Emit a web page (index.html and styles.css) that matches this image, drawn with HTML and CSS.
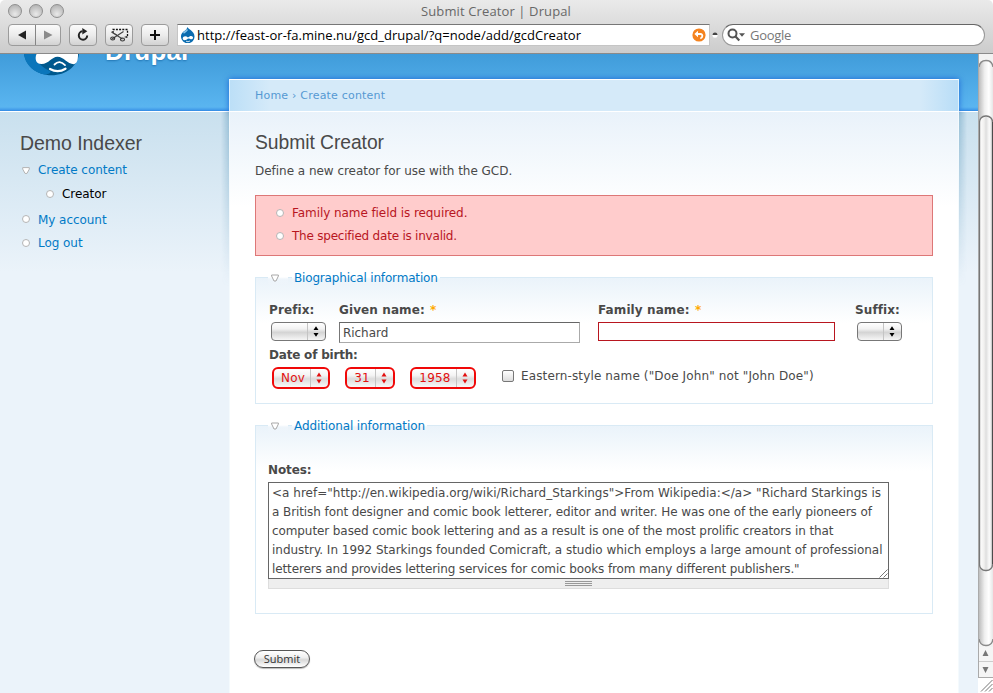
FILE: index.html
```html
<!DOCTYPE html>
<html lang="en">
<head>
<meta charset="utf-8">
<title>Submit Creator | Drupal</title>
<link rel="stylesheet" href="styles.css">
</head>
<body>
<header class="chrome">
  <div class="titlebar">
    <div class="lights"><i></i><i></i><i></i></div>
    <div class="wintitle"><span>Submit Creator | Drupal</span></div>
  </div>
  <div class="toolbar">
    <div class="btn pair">
      <span><svg width="26" height="20" viewBox="0 0 26 20"><path d="M17 5.500v9L9 10z" fill="#222"/></svg></span>
      <span><svg width="25" height="20" viewBox="0 0 25 20"><path d="M8 5.500v9l8.500-4.500z" fill="#8b8b8b"/></svg></span>
    </div>
    <div class="btn"><svg width="26" height="20" viewBox="0 0 26 20"><path d="M12.500 6.300a4.200 4.200 0 1 0 4.700 4.200" fill="none" stroke="#222" stroke-width="2"/><path d="M12.300 3v6.500l5-3.200z" fill="#222"/></svg></div>
    <div class="btn"><svg width="26" height="20" viewBox="0 0 26 20"><path d="M7 8V4.500h14.500v7.500H18" fill="none" stroke="#111" stroke-width="1.300" stroke-dasharray="2 1.200"/><path d="M5.500 7l11 7M6 14l11.500-7.500" stroke="#444" stroke-width="1.200" fill="none"/><path d="M5 6.200l6 3.200-.5 1z" fill="#444"/><ellipse cx="6.700" cy="13.500" rx="2" ry="1.500" fill="none" stroke="#333" stroke-width="1.100"/><ellipse cx="16.500" cy="14.500" rx="2" ry="1.500" fill="none" stroke="#333" stroke-width="1.100"/></svg></div>
    <div class="btn"><svg width="26" height="20" viewBox="0 0 26 20"><path d="M13 5v10M8 10h10" stroke="#111" stroke-width="2"/></svg></div>
    <div class="url">
      <svg class="favicon" width="15" height="16" viewBox="0 0 15 16"><path d="M7.500 0C8 2.400 14.500 4 14.500 9.500A6.500 6.300 0 0 1 1 10C.6 4.500 6.700 4 7.500 0z" fill="#0a6cb0"/><path d="M3.500 6Q6 4.500 7.500 2.500" stroke="#8cc6ea" stroke-width="1.500" fill="none"/><path d="M2.700 11.300c.4-2.500 3.500-2.700 5.300-.7 1.700-2 4-2.300 4.900-.5.600 1.900-1.300 3-3 1.700L8 11.500c-2 2.300-5.300 2.300-5.300-.2z" fill="#fff"/><path d="M6 14.200q2 1.200 4-.2" stroke="#fff" fill="none" stroke-width=".8"/></svg>
      <span class="address">http://feast-or-fa.mine.nu/gcd_drupal/?q=node/add/gcdCreator</span>
      <svg class="snap" width="14" height="14" viewBox="0 0 14 14"><circle cx="7" cy="7" r="6.600" fill="#f5831f"/><path d="M5 6h3.500c2.600 0 2.400 3.700-.2 4.500" fill="none" stroke="#fff" stroke-width="1.800"/><path d="M6 2.800v6.400L2.400 6z" fill="#fff"/></svg>
    </div>
    <svg class="divider" width="6" height="8" viewBox="0 0 6 8"><circle cx="3" cy="4.300" r="2.500" fill="#fff"/><path d="M.5 4a2.500 2.500 0 0 1 5 0z" fill="#444"/></svg>
    <div class="search">
      <svg width="19" height="14" viewBox="0 0 19 14"><circle cx="5.500" cy="5.500" r="4" fill="none" stroke="#555" stroke-width="2"/><path d="M8.500 8.500l3.800 4" stroke="#555" stroke-width="2.200"/><path d="M12 5.200h6l-3 3.600z" fill="#555"/></svg>
      <span>Google</span>
    </div>
  </div>
</header>
<div class="viewport">
  <div class="page">
    <div class="masthead">
      <svg class="logo" width="58" height="23" viewBox="0 0 58 23"><path d="M1 0H56C54.500 12 43 21.300 28.500 21.300S3 12 1 0z" fill="#00598e"/><path d="M1 0H13C13 8 20 14 27 17 29 19 24 21.300 19 20 8 16.500 2 9 1 0z" fill="#0b76bb"/><path d="M13.500 0C11.500 5 13 10 18.500 10 26 10 28.500 2.800 34.500 2.800 41 2.800 44 10.200 51 10.200 55 9 55 4 55 0z" fill="#fff"/><path d="M31.500 10.500q5-5 10.500.6" fill="none" stroke="#fff" stroke-width="1.800" stroke-linecap="round"/><path d="M27 15q8 4.500 15.500-.3" fill="none" stroke="#fff" stroke-width="2.200" stroke-linecap="round"/></svg>
      <div class="sitename">Drupal</div>
    </div>
    <div class="columns">
      <aside class="sidebar">
        <h2>Demo Indexer</h2>
        <ul class="menu">
          <li><svg class="tri" width="8" height="7" viewBox="0 0 8 7"><path d="M.7.6h6.600v1.500L5 6.400H3L.7 2.100z" fill="#fff" stroke="#b3b3b3"/></svg><a>Create content</a></li>
          <li class="sub"><i class="dot"></i><a>Creator</a></li>
          <li><i class="dot"></i><a>My account</a></li>
          <li><i class="dot"></i><a>Log out</a></li>
        </ul>
      </aside>
      <main class="panel">
        <nav class="crumbs"><a>Home</a> › <a>Create content</a></nav>
        <div class="content">
          <h1>Submit Creator</h1>
          <p class="intro">Define a new creator for use with the GCD.</p>
          <ul class="errors">
            <li><i class="dot"></i><span>Family name field is required.</span></li>
            <li><i class="dot"></i><span class="tight">The specified date is invalid.</span></li>
          </ul>
          <section class="group bio">
            <div class="legend"><span class="mark"><svg width="8" height="8" viewBox="0 0 8 8"><path d="M.6 1h6.800v1L5 7H3L.6 2z" fill="#fff" stroke="#a8a8a8"/></svg></span><a class="tight">Biographical information</a></div>
            <div class="names">
              <div class="f-prefix"><label>Prefix:</label><div class="select"><b></b><svg width="17" height="17" viewBox="0 0 17 17"><path d="M5.500 7L8 3.200 10.500 7zM5.500 10l2.500 3.800 2.500-3.800z"/></svg></div></div>
              <div class="f-given"><label>Given name: <em>*</em></label><input type="text" value="Richard"></div>
              <div class="f-family"><label>Family name: <em>*</em></label><input class="bad" type="text"></div>
              <div class="f-suffix"><label>Suffix:</label><div class="select"><b></b><svg width="17" height="17" viewBox="0 0 17 17"><path d="M5.500 7L8 3.200 10.500 7zM5.500 10l2.500 3.800 2.500-3.800z"/></svg></div></div>
            </div>
            <label class="dob">Date of birth:</label>
            <div class="dates">
              <div class="select red month"><b>Nov</b><svg width="17" height="18" viewBox="0 0 17 18"><path d="M5.500 7.500L8 3.500l2.500 4zM5.500 10.500l2.500 4 2.500-4z"/></svg></div>
              <div class="select red day"><b>31</b><svg width="17" height="18" viewBox="0 0 17 18"><path d="M5.500 7.500L8 3.500l2.500 4zM5.500 10.500l2.500 4 2.500-4z"/></svg></div>
              <div class="select red year"><b>1958</b><svg width="17" height="18" viewBox="0 0 17 18"><path d="M5.500 7.500L8 3.500l2.500 4zM5.500 10.500l2.500 4 2.500-4z"/></svg></div>
              <i class="check"></i><span class="eastern">Eastern-style name ("Doe John" not "John Doe")</span>
            </div>
          </section>
          <section class="group extra">
            <div class="legend"><span class="mark"><svg width="8" height="8" viewBox="0 0 8 8"><path d="M.6 1h6.800v1L5 7H3L.6 2z" fill="#fff" stroke="#a8a8a8"/></svg></span><a>Additional information</a></div>
            <label class="notes">Notes:</label>
            <div class="area">
              <div class="text"><p>&lt;a href="http://en.wikipedia.org/wiki/Richard_Starkings"&gt;From Wikipedia:&lt;/a&gt; "Richard Starkings is</p><p>a British font designer and comic book letterer, editor and writer. He was one of the early pioneers of</p><p>computer based comic book lettering and as a result is one of the most prolific creators in that</p><p>industry. In 1992 Starkings founded Comicraft, a studio which employs a large amount of professional</p><p>letterers and provides lettering services for comic books from many different publishers."</p></div>
              <svg class="grip" width="9" height="9" viewBox="0 0 9 9"><path d="M.5 8.500l8-8M4.500 8.500l4-4" stroke="#777" fill="none"/></svg>
            </div>
            <div class="grippie"><i></i></div>
          </section>
          <button class="submit">Submit</button>
        </div>
      </main>
    </div>
  </div>
  <svg class="scroll" width="15" height="639" viewBox="0 0 15 639">
    <defs>
      <linearGradient id="trk"><stop offset="0" stop-color="#bdbdbd"/><stop offset=".4" stop-color="#efefef"/><stop offset=".7" stop-color="#fff"/><stop offset="1" stop-color="#e6e6e6"/></linearGradient>
      <linearGradient id="thm"><stop offset="0" stop-color="#fff"/><stop offset=".35" stop-color="#f1f0ef"/><stop offset=".5" stop-color="#dedede"/><stop offset=".75" stop-color="#fafafa"/><stop offset="1" stop-color="#ddd"/></linearGradient>
    </defs>
    <rect width="15" height="639" fill="#f2f2f2"/>
    <rect x="1" y="6" width="14" height="586" rx="6" fill="url(#trk)"/>
    <path d="M1 13Q2 6.500 8 6.500T15 13M1 585Q2 591.500 8 591.500T15 585" fill="none" stroke="#8a8a8a" stroke-width="1.400"/>
    <rect x="1.500" y="62" width="13" height="454.500" rx="6" fill="url(#thm)" stroke="#777" stroke-width="1.400"/>
    <path d="M14.500 68v442" stroke="#4c4c4c"/>
    <rect x="1" y="593" width="14" height="30" fill="#f5f5f5"/>
    <path d="M1 607.500h14" stroke="#ccc"/>
    <path d="M4.500 602h6L7.500 596zM4.500 613h6L7.500 619z" fill="#777"/>
    <path d="M0 623.500h15" stroke="#aaa"/>
    <rect x="0" y="624" width="15" height="15" fill="#fff"/>
    <path d="M3 637.500L14.500 626M7 637.500l7.500-7.500M11 637.500l3.500-3.500" stroke="#777" fill="none"/>
    <path d="M.5 0v624" stroke="#aaa"/>
  </svg>
</div>
</body>
</html>
```
FILE: styles.css
```css
* { box-sizing: border-box; }
body { margin: 0; width: 993px; height: 693px; overflow: hidden; display: flex; flex-direction: column; background: #fff; font: 12px/19px "DejaVu Sans", Verdana, sans-serif; letter-spacing: -.05px; color: #494949; }
h1, h2, p, ul { margin: 0; padding: 0; list-style: none; }
svg { display: block; flex: none; }
i, em { font-style: normal; }
a, .errors span, .eastern, p, label { white-space: nowrap; }

.chrome { height: 54px; flex: none; background: linear-gradient(#eaeaea, #cccccc); border-bottom: 1px solid #8a8a8a; border-radius: 5px 5px 0 0; font-family: "Open Sans", sans-serif; letter-spacing: 0; position: relative; z-index: 2; }
.titlebar { height: 24px; display: flex; padding-left: 8px; }
.lights { width: 64px; display: flex; gap: 7px; padding-top: 4px; }
.lights i { width: 14px; height: 14px; border-radius: 50%; border: 1px solid #8f8f8f; background: radial-gradient(circle at 50% 75%, #e9e9e9, #c3c3c3 60%, #aaa); }
.wintitle { flex: 1; padding-left: 349px; font-size: 13px; line-height: 23px; color: #686868; letter-spacing: .12px; }
.toolbar { height: 22px; display: flex; padding-left: 8px; }
.btn { width: 28px; height: 22px; margin-right: 8px; border: 1px solid #9b9b9b; border-radius: 4px; background: linear-gradient(#fbfbfb, #ececec 50%, #d2d2d2); display: flex; flex: none; }
.pair { width: 53px; }
.pair span + span { border-left: 1px solid #858585; }
.url { width: 533px; height: 22px; flex: none; background: #fff; border: 1px solid #c5c5c5; border-top: 1px solid #777; display: flex; align-items: center; padding-left: 2px; }
.address { width: 497px; padding-left: 2px; font-size: 13px; color: #000; white-space: nowrap; letter-spacing: .03px; }
.divider { margin: 7px 4px 0 2px; }
.search { width: 263px; height: 22px; flex: none; border: 1px solid #999; border-top-color: #666; border-radius: 11px; background: #fff; display: flex; align-items: center; padding-left: 4px; }
.search span { margin-left: 4px; font-size: 13px; color: #777; letter-spacing: -.3px; }

.viewport { height: 639px; display: flex; }
.page { width: 978px; height: 639px; background: linear-gradient(#409cda, #5ab5f0 53px, #4099e9 56px, #2f86e2 57px, #fff 57px, #fff 58px, #c9e0ee 58px, #ebf3fa 218px, #ebf3fa); }
.masthead { height: 25px; padding-left: 23px; display: flex; }
.sitename { height: 26px; margin: -16px 0 0 24px; color: #fff; font: bold 26px/26px "Liberation Sans", Arial, sans-serif; letter-spacing: .2px; text-shadow: 0 1px 2px #2377b5; }
.columns { height: 614px; display: flex; }
.sidebar { width: 229px; padding: 51px 0 0 20px; }
h1, h2 { font: 19.5px/26px "Liberation Sans", Arial, sans-serif; color: #494949; }
h1 { font-size: 19.3px; }
.menu { padding-top: 3px; }
.menu li { height: 23px; display: flex; align-items: center; color: #027ac6; padding-left: 2px; }
.menu .sub { padding-left: 26px; height: 25px; color: #000; }
.menu .sub + li { height: 26px; }
.menu .sub + li + li { height: 21px; }
.menu a { margin-left: 8px; }
.dot { width: 8px; height: 8px; border-radius: 50%; border: 1px solid #b5b5b5; background: #fff; flex: none; position: relative; top: -1px; left: -.5px; }
.panel { width: 730px; display: flex; flex-direction: column; }
.crumbs { height: 32px; padding: 7px 0 0 25px; border: 1px solid #def2fd; border-top-color: #fff; border-bottom: 0; box-shadow: 0 0 6px rgba(15, 85, 210, .8); background: linear-gradient(90deg, #bcdff7, #d5eaf9 40px, #d5eaf9 690px, #b8ddf7); font-size: 11px; line-height: 17px; letter-spacing: .2px; color: #5599d3; }
.content { flex: 1; border: 1px solid #f4fafd; border-top-color: #fff; border-bottom: 0; padding: 18px 25px 0; background: linear-gradient(#e9f2fa, #fff 95px); position: relative; }
.content::before, .content::after { content: ""; position: absolute; top: 0; height: 175px; width: 8px; }
.content::before { left: -9px; background: linear-gradient(90deg, transparent, rgba(60, 130, 170, .35)); mask-image: linear-gradient(#000, transparent); }
.content::after { right: -9px; background: linear-gradient(270deg, transparent, rgba(60, 130, 170, .35)); mask-image: linear-gradient(#000, transparent); }
.intro { padding-top: 6px; height: 25px; letter-spacing: -.03px; }
.errors { margin-top: 14px; height: 61px; border: 1px solid #d77; background: #fcc; padding: 6px 0 0 20px; color: #b8161f; }
.errors li { height: 23px; display: flex; align-items: center; }
.errors span { margin-left: 8px; letter-spacing: -.07px; }
.errors .tight { letter-spacing: -.22px; }
.group { border: 1px solid #d9eaf5; background: linear-gradient(#eaf3fa, #fff 45px); }
.bio { margin-top: 21px; height: 127px; }
.extra { margin-top: 21px; height: 189px; padding-left: 12px; }
.legend { height: 20px; margin: -9px 0 0 12px; display: flex; color: #027ac6; line-height: 19px; }
.legend .mark, .legend a { background: linear-gradient(#fff 8px, #eef5fb 10px, transparent); }
.legend a { letter-spacing: -.11px; }
.legend .tight { letter-spacing: -.17px; }
.mark { width: 20px; padding: 5px 0 0 3px; }
.legend a { margin-left: 4px; padding: 0 2px; }
.extra .legend { margin-left: 0; }
label { display: block; font-weight: bold; letter-spacing: .1px; }
em { color: #fa0; margin-left: 1px; }
.names { display: flex; padding: 12px 0 0 13px; }
.names label { height: 21px; }
.f-prefix { width: 70px; }
.f-given { width: 259px; }
.f-family { width: 257px; }
input { display: block; height: 21px; width: 241px; padding: 1px 3px 0; border: 1px solid #aaa; border-top-color: #666; border-left-color: #777; background: #fff; font: inherit; color: #494949; }
.bad { width: 237px; height: 19px; border: 1px solid #b8161f; }
.f-given input { letter-spacing: -.05px; }
.select { height: 19px; border: 1px solid #777; border-radius: 4px; background: linear-gradient(#fff, #f2f2f2 35%, #d4d4d4 55%, #f6f6f6); display: flex; }
.select b { flex: 1; border-right: 1px solid #c4c4c4; font-weight: normal; text-align: center; }
.f-prefix .select { width: 55px; margin-left: 2px; }
.f-suffix .select { width: 45px; margin-left: 2px; }
.dob { margin-left: 13px; height: 19px; margin-top: 3px; letter-spacing: -.2px; }
.dates { display: flex; padding: 2px 0 0 16px; }
.red { height: 22px; border: 2px solid #f00808; border-radius: 6px; color: #e21010; line-height: 18px; letter-spacing: .2px; background: linear-gradient(#fff, #f4f4f4 35%, #dcdcdc 55%, #f8f8f8); }
.red b { padding-left: 2px; }
.red svg { fill: #e21010; }
.month { width: 58px; }
.day { width: 50px; margin: 0 15px; }
.year { width: 66px; }
.check { width: 12px; height: 12px; margin: 3px 7px 0 26px; border: 1px solid #777; border-radius: 2px; background: linear-gradient(#fff, #ddd); }
.eastern { letter-spacing: .13px; }
.notes { margin-top: 24px; height: 21px; letter-spacing: -.1px; }
.area { width: 621px; height: 97px; border: 1px solid #666; background: #fff; padding: 1px 3px; position: relative; }
.text p { width: max-content; }
.text p:nth-child(1) { letter-spacing: .015px; }
.text p:nth-child(2) { letter-spacing: -.087px; }
.text p:nth-child(3) { letter-spacing: -.093px; }
.text p:nth-child(4) { letter-spacing: -.02px; }
.text p:nth-child(5) { letter-spacing: -.122px; }
.grip { position: absolute; right: 0; bottom: 0; }
.grippie { width: 621px; height: 10px; background: #eee; border: 1px solid #ddd; border-top: 0; display: flex; justify-content: center; }
.grippie i { width: 27px; height: 6px; margin-top: 2px; background: repeating-linear-gradient(#999 0 1px, #eee 1px 2px); }
.submit { display: block; margin: 36px 0 0 -1px; width: 56px; height: 18px; padding: 0; border: 1px solid #555; border-radius: 9px; background: linear-gradient(#fff, #f0f0f0 40%, #d8d8d8 55%, #fff); font: 11px/14px "Open Sans", sans-serif; color: #333; box-shadow: 0 1px 1px #bbb; }
```
